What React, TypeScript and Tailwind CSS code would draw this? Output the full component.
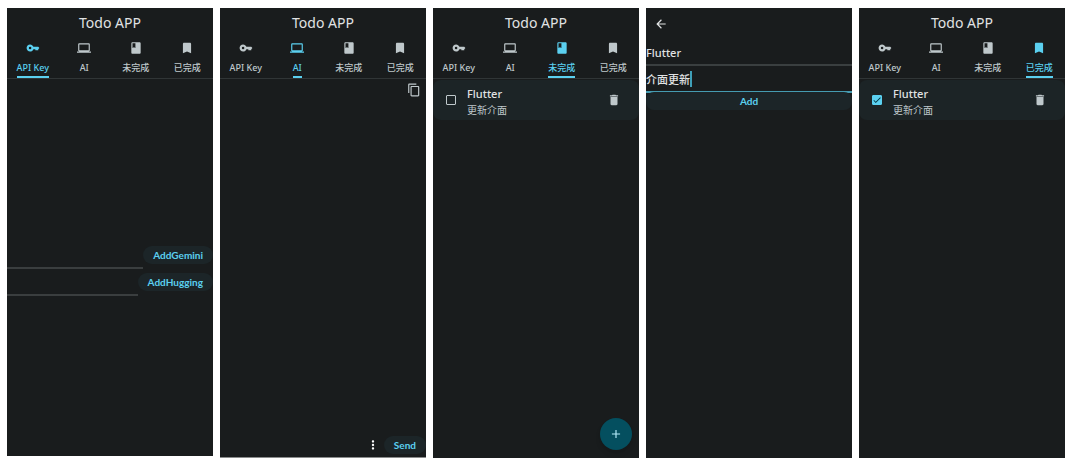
import { useState, type ComponentType, type ReactNode } from "react";
import {
  MdAdd,
  MdArrowBack,
  MdBook,
  MdBookmark,
  MdCheck,
  MdComputer,
  MdContentCopy,
  MdDelete,
  MdMoreVert,
} from "react-icons/md";

function KeyIcon({ size = 14 }: { size?: number }) {
  return (
    <svg width={size} height={size} viewBox="0 0 24 24" fill="currentColor" aria-hidden="true">
      <path
        fillRule="evenodd"
        d="M21 10h-8.35C11.83 7.67 9.61 6 7 6c-3.31 0-6 2.69-6 6s2.69 6 6 6c2.61 0 4.83-1.67 5.65-4H16v1.8h5V14l2-2-2-2zM7 14.2a2.2 2.2 0 1 1 0-4.4 2.2 2.2 0 0 1 0 4.4z"
      />
    </svg>
  );
}

const tabs: { label: string; Icon: ComponentType<{ size?: number }> }[] = [
  { label: "API Key", Icon: KeyIcon },
  { label: "AI", Icon: MdComputer },
  { label: "未完成", Icon: MdBook },
  { label: "已完成", Icon: MdBookmark },
];

function Screen({ children, className = "" }: { children: ReactNode; className?: string }) {
  return (
    <section className={`flex min-w-0 flex-col bg-[#191c1d] ${className}`}>{children}</section>
  );
}

function Header({ active }: { active: number }) {
  return (
    <header>
      <h1 className="text-center text-sm leading-[30px] text-[#e1e3e4]">Todo APP</h1>
      <nav className="grid grid-cols-4 border-b border-[#303536] pt-[3px]">
        {tabs.map(({ label, Icon }, i) => (
          <button
            key={label}
            type="button"
            aria-current={i === active ? "page" : undefined}
            className={`flex flex-col items-center text-[9px] font-medium ${
              i === active ? "text-[#5bd0f0]" : "text-[#bfc8cb]"
            }`}
          >
            <Icon size={14} />
            <span
              className={`mt-[5px] border-b-2 leading-4 whitespace-nowrap ${
                i === active ? "border-[#5bd0f0]" : "border-transparent"
              }`}
            >
              {label}
            </span>
          </button>
        ))}
      </nav>
    </header>
  );
}

function PillButton({ children }: { children: ReactNode }) {
  return (
    <button
      type="button"
      className="h-[18px] shrink-0 rounded-full bg-[#1c2528] px-[10px] font-[Lato,sans-serif] text-[10px] leading-[18px] font-bold text-[#5bd0f0]"
    >
      {children}
    </button>
  );
}

function KeyRow({ label, action }: { label: string; action: string }) {
  return (
    <div className="flex h-[27px] items-stretch">
      <input
        type="text"
        aria-label={label}
        className="min-w-0 flex-1 border-b-2 border-[#3a3e3f] bg-transparent text-[11px] text-[#e1e3e4] outline-none"
      />
      <div className="flex items-start pt-1">
        <PillButton>{action}</PillButton>
      </div>
    </div>
  );
}

function TodoCard({ title, note, done }: { title: string; note: string; done: boolean }) {
  const [checked, setChecked] = useState(done);
  return (
    <div className="mt-px flex h-10 items-center rounded-lg bg-[#1c2426] pr-[18px] pl-[13px]">
      <label className="flex min-w-0 flex-1 items-center gap-[11px]">
        <span className="relative flex size-[10px] shrink-0">
          <input
            type="checkbox"
            checked={checked}
            onChange={(e) => setChecked(e.target.checked)}
            className="size-[10px] appearance-none rounded-[1px] border border-[#bfc8cb] checked:border-[#5bd0f0] checked:bg-[#5bd0f0]"
          />
          {checked && (
            <MdCheck size={10} className="pointer-events-none absolute inset-0 text-[#003641]" />
          )}
        </span>
        <span className="flex flex-col pt-1">
          <span className="text-[11px] leading-4 font-medium text-[#e1e3e4]">{title}</span>
          <span className="text-[10px] leading-4 text-[#bfc8cb]">{note}</span>
        </span>
      </label>
      <button type="button" aria-label="Delete" className="text-[#bfc8cb]">
        <MdDelete size={14} />
      </button>
    </div>
  );
}

export default function App() {
  return (
    <main
      className="grid min-h-screen grid-cols-5 gap-[7px] bg-white px-[7px] pt-2 pb-[10px]"
      style={{ fontFamily: '"Noto Sans", "Noto Sans CJK TC", sans-serif' }}
    >
      <Screen className="mb-0.5">
        <Header active={0} />
        <div className="mt-[163px] flex flex-col">
          <KeyRow label="Gemini API key" action="AddGemini" />
          <KeyRow label="Hugging Face API key" action="AddHugging" />
        </div>
      </Screen>

      <Screen className="border-b border-[#8a8c8c]">
        <Header active={1} />
        <div className="flex justify-end pt-1 pr-[5px]">
          <button type="button" aria-label="Copy" className="text-[#bfc8cb]">
            <MdContentCopy size={14} />
          </button>
        </div>
        <div className="mt-auto flex items-center justify-end gap-1 pb-[3px]">
          <button type="button" aria-label="More options" className="text-white">
            <MdMoreVert size={14} />
          </button>
          <PillButton>Send</PillButton>
        </div>
      </Screen>

      <Screen>
        <Header active={2} />
        <TodoCard title="Flutter" note="更新介面" done={false} />
        <div className="mt-auto flex justify-end pr-[7px] pb-2">
          <button
            type="button"
            aria-label="Add todo"
            className="flex size-8 items-center justify-center rounded-full bg-[#044f5f] text-[#b4ebfa] shadow-md"
          >
            <MdAdd size={14} />
          </button>
        </div>
      </Screen>

      <Screen>
        <div className="flex h-8 items-center pl-2">
          <button type="button" aria-label="Back" className="text-[#e1e3e4]">
            <MdArrowBack size={14} />
          </button>
        </div>
        <input
          type="text"
          aria-label="Title"
          defaultValue="Flutter"
          className="h-[26px] border-b-2 border-[#3a3f40] bg-transparent text-[11px] font-medium text-[#e1e3e4] outline-none"
        />
        <div className="flex h-[27px] items-center border-b-2 border-[#459bb1]">
          <input
            type="text"
            aria-label="Note"
            defaultValue="介面更新"
            className="[field-sizing:content] bg-transparent pt-[3px] text-[11px] font-medium text-[#e1e3e4] outline-none"
          />
          <span className="h-4 w-0.5 bg-[#3f9fb8]" />
        </div>
        <button
          type="button"
          className="relative -mt-px h-[18px] rounded-lg bg-[#1c2528] font-[Lato,sans-serif] text-[10px] leading-[18px] font-bold text-[#5bd0f0]"
        >
          Add
        </button>
      </Screen>

      <Screen>
        <Header active={3} />
        <TodoCard title="Flutter" note="更新介面" done />
      </Screen>
    </main>
  );
}
